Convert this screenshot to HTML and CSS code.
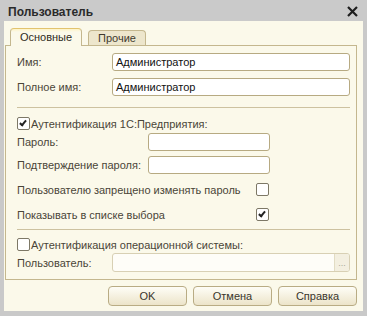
FILE: index.html
```html
<!DOCTYPE html>
<html lang="ru">
<head>
    <meta charset="UTF-8">
    <title>Пользователь</title>
    <link rel="stylesheet" href="styles.css">
</head>
<body>
    <div class="window">
        <div class="titlebar">
            <span class="title">Пользователь</span>
            <svg class="close" width="11" height="11" viewBox="0 0 11 11">
                <path d="M1 1 L10 10 M10 1 L1 10" stroke="#1e1e1e" stroke-width="2.2" fill="none"/>
            </svg>
        </div>

        <div class="frame">
            <div class="tabs">
                <div class="tab active">Основные</div>
                <div class="tab">Прочие</div>
            </div>

            <div class="panel">
                <div class="row row-name">
                    <span class="label label-wide">Имя:</span>
                    <div class="input">Администратор</div>
                </div>
                <div class="row row-name gap7">
                    <span class="label label-wide">Полное имя:</span>
                    <div class="input">Администратор</div>
                </div>

                <div class="sep sep-first"></div>

                <div class="check-row cb-auth">
                    <span class="checkbox checked"></span>
                    <span class="check-text">Аутентификация 1С:Предприятия:</span>
                </div>

                <div class="row row-pwd gap3">
                    <span class="label label-pwd">Пароль:</span>
                    <div class="input input-short"></div>
                </div>
                <div class="row row-pwd gap5">
                    <span class="label label-pwd">Подтверждение пароля:</span>
                    <div class="input input-short"></div>
                </div>

                <div class="opt-row gap9">
                    <span class="label label-opt">Пользователю запрещено изменять пароль</span>
                    <span class="checkbox"></span>
                </div>
                <div class="opt-row gap12">
                    <span class="label label-opt">Показывать в списке выбора</span>
                    <span class="checkbox checked"></span>
                </div>

                <div class="sep sep-second"></div>

                <div class="check-row cb-os">
                    <span class="checkbox"></span>
                    <span class="check-text">Аутентификация операционной системы:</span>
                </div>

                <div class="row row-user">
                    <span class="label label-wide">Пользователь:</span>
                    <div class="input input-disabled">
                        <span class="select-btn">...</span>
                    </div>
                </div>
            </div>

            <div class="buttons">
                <button class="btn">OK</button>
                <button class="btn">Отмена</button>
                <button class="btn">Справка</button>
            </div>
        </div>
    </div>
</body>
</html>
```

FILE: styles.css
```css
body {
    margin: 0;
    padding: 0;
    font-family: "Liberation Sans", Arial, sans-serif;
    font-size: 11px;
    color: #4a4538;
    background: #ffffff;
}

.window {
    width: 367px;
    height: 316px;
    background: #c9c9c9;
}

.titlebar {
    height: 21px;
    display: flex;
    align-items: center;
    justify-content: space-between;
    padding: 0 9px 0 8px;
    box-sizing: border-box;
    background: #cacaca;
}

.title {
    font-weight: bold;
    font-size: 12px;
    color: #2a2a2a;
    margin-top: 2px;
}

.close {
    margin-top: 2px;
}

.frame {
    height: 295px;
    box-sizing: border-box;
    margin: 0 4px;
    padding-top: 7px;
    background: #fbf9ea;
    border-bottom: 5px solid #c9c9c9;
    box-shadow: 4px 1px 0 #c9c9c9;
}

/* tabs */
.tabs {
    display: flex;
    align-items: flex-end;
    height: 17px;
    padding-left: 6px;
    position: relative;
    z-index: 2;
}

.tab {
    height: 15px;
    line-height: 14px;
    margin-right: 6px;
    border: 1px solid #c4b78e;
    border-bottom: none;
    border-radius: 4px 4px 0 0;
    background: #ede6cc;
    color: #3f3a2e;
    box-sizing: border-box;
    width: 58px;
    text-align: center;
}

.tab.active {
    height: 18px;
    line-height: 17px;
    margin-bottom: -1px;
    width: 72px;
    background: linear-gradient(#fdf3c6 0, #fbf9ea 3px);
    border-top-color: #e2c36e;
    color: #2f2b22;
}

/* panel */
.panel {
    margin-left: 1px;
    width: 352px;
    height: 235px;
    box-sizing: border-box;
    border: 1px solid #c4b78e;
    padding: 7px 6px 7px 11px;
}

.row {
    display: flex;
    align-items: center;
    height: 18px;
}

.row-user {
    height: 19px;
    margin-top: 2px;
}

.gap3 { margin-top: 3px; }
.gap5 { margin-top: 5px; }
.gap7 { margin-top: 7px; }
.gap9 { margin-top: 9px; }
.gap12 { margin-top: 12px; }

.label {
    flex: none;
    white-space: nowrap;
}

.label-wide { width: 95px; }
.label-pwd { width: 131px; }
.label-opt { width: 239px; }

.input {
    flex: 1;
    height: 100%;
    box-sizing: border-box;
    border: 1px solid #b7aa82;
    border-radius: 3px;
    background: #ffffff;
    color: #111111;
    padding-left: 3px;
    display: flex;
    align-items: center;
}

.input-short {
    flex: none;
    width: 122px;
}

.input-disabled {
    border-color: #d8d0b4;
    justify-content: flex-end;
    padding: 0;
    background: #fefdf8;
}

.select-btn {
    width: 15px;
    height: 100%;
    box-sizing: border-box;
    border-left: 1px solid #e2dcc4;
    background: #f3efe0;
    color: #a9a59a;
    font-size: 9px;
    text-align: center;
    line-height: 18px;
    border-radius: 0 2px 2px 0;
}

.sep {
    height: 1px;
    background: #cdc2a0;
}

.sep-first { margin-top: 11px; }
.sep-second { margin-top: 8px; }

.check-row {
    display: flex;
    align-items: center;
    height: 13px;
}

.cb-auth { margin-top: 9px; }
.cb-os { margin-top: 8px; }

.check-text {
    margin-left: 1px;
    white-space: nowrap;
}

.opt-row {
    display: flex;
    align-items: center;
    height: 13px;
}

.checkbox {
    flex: none;
    width: 13px;
    height: 13px;
    box-sizing: border-box;
    border: 1px solid #7d7866;
    border-radius: 2px;
    background: #ffffff;
    position: relative;
}

.checkbox.checked::after {
    content: "";
    position: absolute;
    left: 3px;
    top: 1px;
    width: 2px;
    height: 5px;
    border: solid #222222;
    border-width: 0 2px 2px 0;
    transform: rotate(40deg);
}

/* buttons */
.buttons {
    display: flex;
    justify-content: flex-end;
    gap: 6px;
    width: 352px;
    margin-left: 1px;
    margin-top: 6px;
}

.btn {
    width: 79px;
    height: 20px;
    box-sizing: border-box;
    border: 1px solid #b9ac84;
    border-radius: 4px;
    background: linear-gradient(#fefdf6, #ece4c9);
    font-family: "Liberation Sans", Arial, sans-serif;
    font-size: 11px;
    font-weight: normal;
    color: #3a362c;
    padding: 0;
    cursor: pointer;
}
```
